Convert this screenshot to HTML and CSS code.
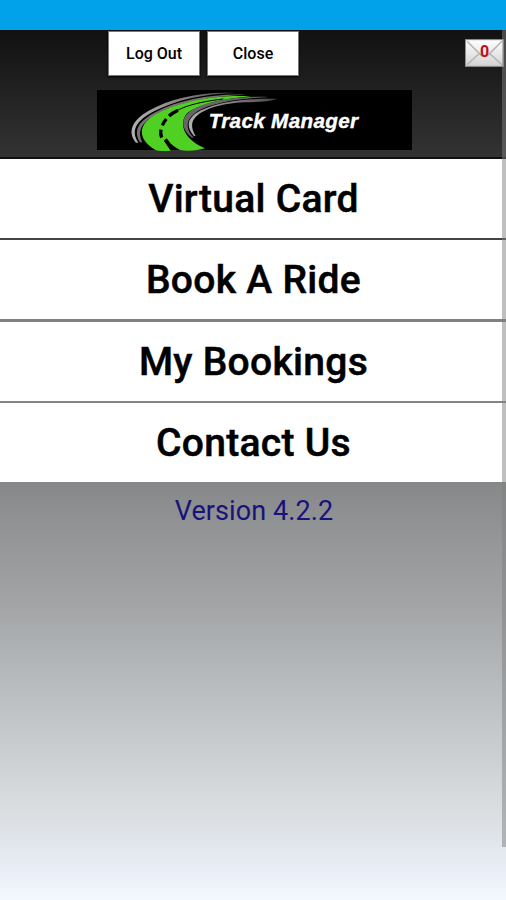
FILE: index.html
```html
<!DOCTYPE html>
<html lang="en">
<head>
<meta charset="utf-8">
<title>Track Manager</title>
<link rel="stylesheet" href="styles.css">
</head>
<body>
<div class="status-bar"></div>
<header class="header">
  <div class="toolbar">
    <button class="tool-button">Log Out</button>
    <button class="tool-button">Close</button>
    <div class="mail">
      <svg class="mail-icon" viewBox="0 0 38 27" aria-hidden="true">
        <defs>
          <linearGradient id="paper" x2="0" y2="1"><stop stop-color="#fff"/><stop offset="1" stop-color="#d2d2d2"/></linearGradient>
        </defs>
        <rect x=".5" y=".5" width="37" height="26" fill="url(#paper)" stroke="#909090"/>
        <path d="M2 2 16 16q3 2 6 0L36 2M2 25l12-11M36 25 24 14" fill="none" stroke="#b4b4b4" stroke-width="1.5"/>
      </svg>
      <span class="mail-count">0</span>
    </div>
  </div>
  <svg class="logo" viewBox="21 30 945 183" role="img" aria-label="Track Manager">
    <defs>
      <linearGradient id="rail"><stop stop-color="#b0b0b0"/><stop offset=".45" stop-color="#8c8484"/><stop offset="1" stop-color="#444"/></linearGradient>
    </defs>
    <rect x="21" y="30" width="945" height="180" fill="#000"/>
    <path d="M138 188C112 157 124 122 176 92C245 53 342 33 438 39C339 41 256 61 192 94C139 122 121 151 145 188Z" fill="url(#rail)"/>
    <path d="M150 187C129 151 144 124 199 95C267 60 364 41 465 44C362 48 271 67 208 98C156 124 140 150 157 187Z" fill="#777171"/>
    <path d="M198 211C143 180 143 137 189 108C257 66 375 43 484 49C392 57 326 75 292 99C261 133 287 182 345 205C323 213 291 214 270 210C251 199 240 190 232 179L222 183L242 212Q219 215 198 211Z" fill="#50d022"/>
    <path d="M400 57C317 67 280 80 250 98" fill="none" stroke="#000" stroke-width="3"/>
    <path d="M264 91Q247 99 237 108M229 117Q221 126 217 136M213 149Q210 160 215 173M226 178l11 14" fill="none" stroke="#000" stroke-width="10"/>
    <path d="M306 173C269 144 270 108 315 85C369 58 459 48 536 51C439 56 365 70 324 93C284 118 286 147 311 173Z" fill="#666"/>
    <path d="M312 168C286 139 291 113 333 91C390 64 470 55 562 56C535 67 501 65 459 67C409 70 366 79 335 97C301 118 300 140 317 168Z" fill="url(#rail)"/>
    <text class="logo-text" x="356" y="143" textLength="448">Track Manager</text>
  </svg>
</header>
<nav class="menu">
  <a class="menu-item">Virtual Card</a>
  <a class="menu-item">Book A Ride</a>
  <a class="menu-item">My Bookings</a>
  <a class="menu-item">Contact Us</a>
</nav>
<p class="version">Version 4.2.2</p>
<div class="scrollbar"></div>
</body>
</html>
```
FILE: styles.css
```css
* { box-sizing: border-box; }
body {
  position: relative;
  height: 900px;
  margin: 0;
  overflow: hidden;
  font-family: Roboto, sans-serif;
  background: linear-gradient(#444 0, #444 240px, #808080 310px, #868788 482px, #8f9193 518px, #a1a3a5 600px, #bdc0c2 700px, #d7dbdd 800px, #e7ebf4 865px, #f4f8ff 900px);
}
.status-bar { height: 30px; background: #02a2eb; }
.header {
  height: 129px;
  background: linear-gradient(#111, #333);
  border-bottom: 2px solid #111;
}
.toolbar {
  display: flex;
  height: 60px;
  padding: 1px 2px 0 108px;
  gap: 7px;
  align-items: flex-start;
}
.tool-button {
  width: 92px;
  height: 45px;
  padding: 0 0 1px;
  border: 1px solid #777;
  background: #fff;
  color: #000;
  font: 500 16px Roboto, sans-serif;
  box-shadow: 0 1px 2px #000;
}
.mail { position: relative; width: 39px; height: 28px; margin: 8px 0 0 auto; }
.mail-icon { display: block; width: 39px; height: 28px; }
.mail-count {
  position: absolute;
  inset: 0;
  color: #c00d18;
  font-size: 16px;
  font-weight: 700;
  line-height: 26px;
  text-align: center;
}
.logo { display: block; width: 315px; height: 61px; margin-left: 97px; }
.logo-text {
  fill: #fff;
  stroke: #fff;
  stroke-width: 1.2px;
  font: italic 700 62px "Liberation Sans", sans-serif;
}
.menu { display: grid; grid-template-rows: 79px 79px 79px 79px; gap: 2.33px; }
.menu-item {
  display: flex;
  align-items: center;
  justify-content: center;
  padding: 1px 0 0 1px;
  background: #fff;
  color: #000;
  font-size: 39px;
  font-weight: 500;
  letter-spacing: .3px;
  -webkit-text-stroke: .5px #000;
}
.version {
  margin: 13px 0 0;
  padding-left: 2px;
  color: #18127b;
  font-size: 27px;
  line-height: 32px;
  letter-spacing: .1px;
  text-align: center;
}
.scrollbar {
  position: absolute;
  top: 30px;
  right: 0;
  width: 4px;
  height: 817px;
  background: rgba(128, 128, 128, .5);
}
```
